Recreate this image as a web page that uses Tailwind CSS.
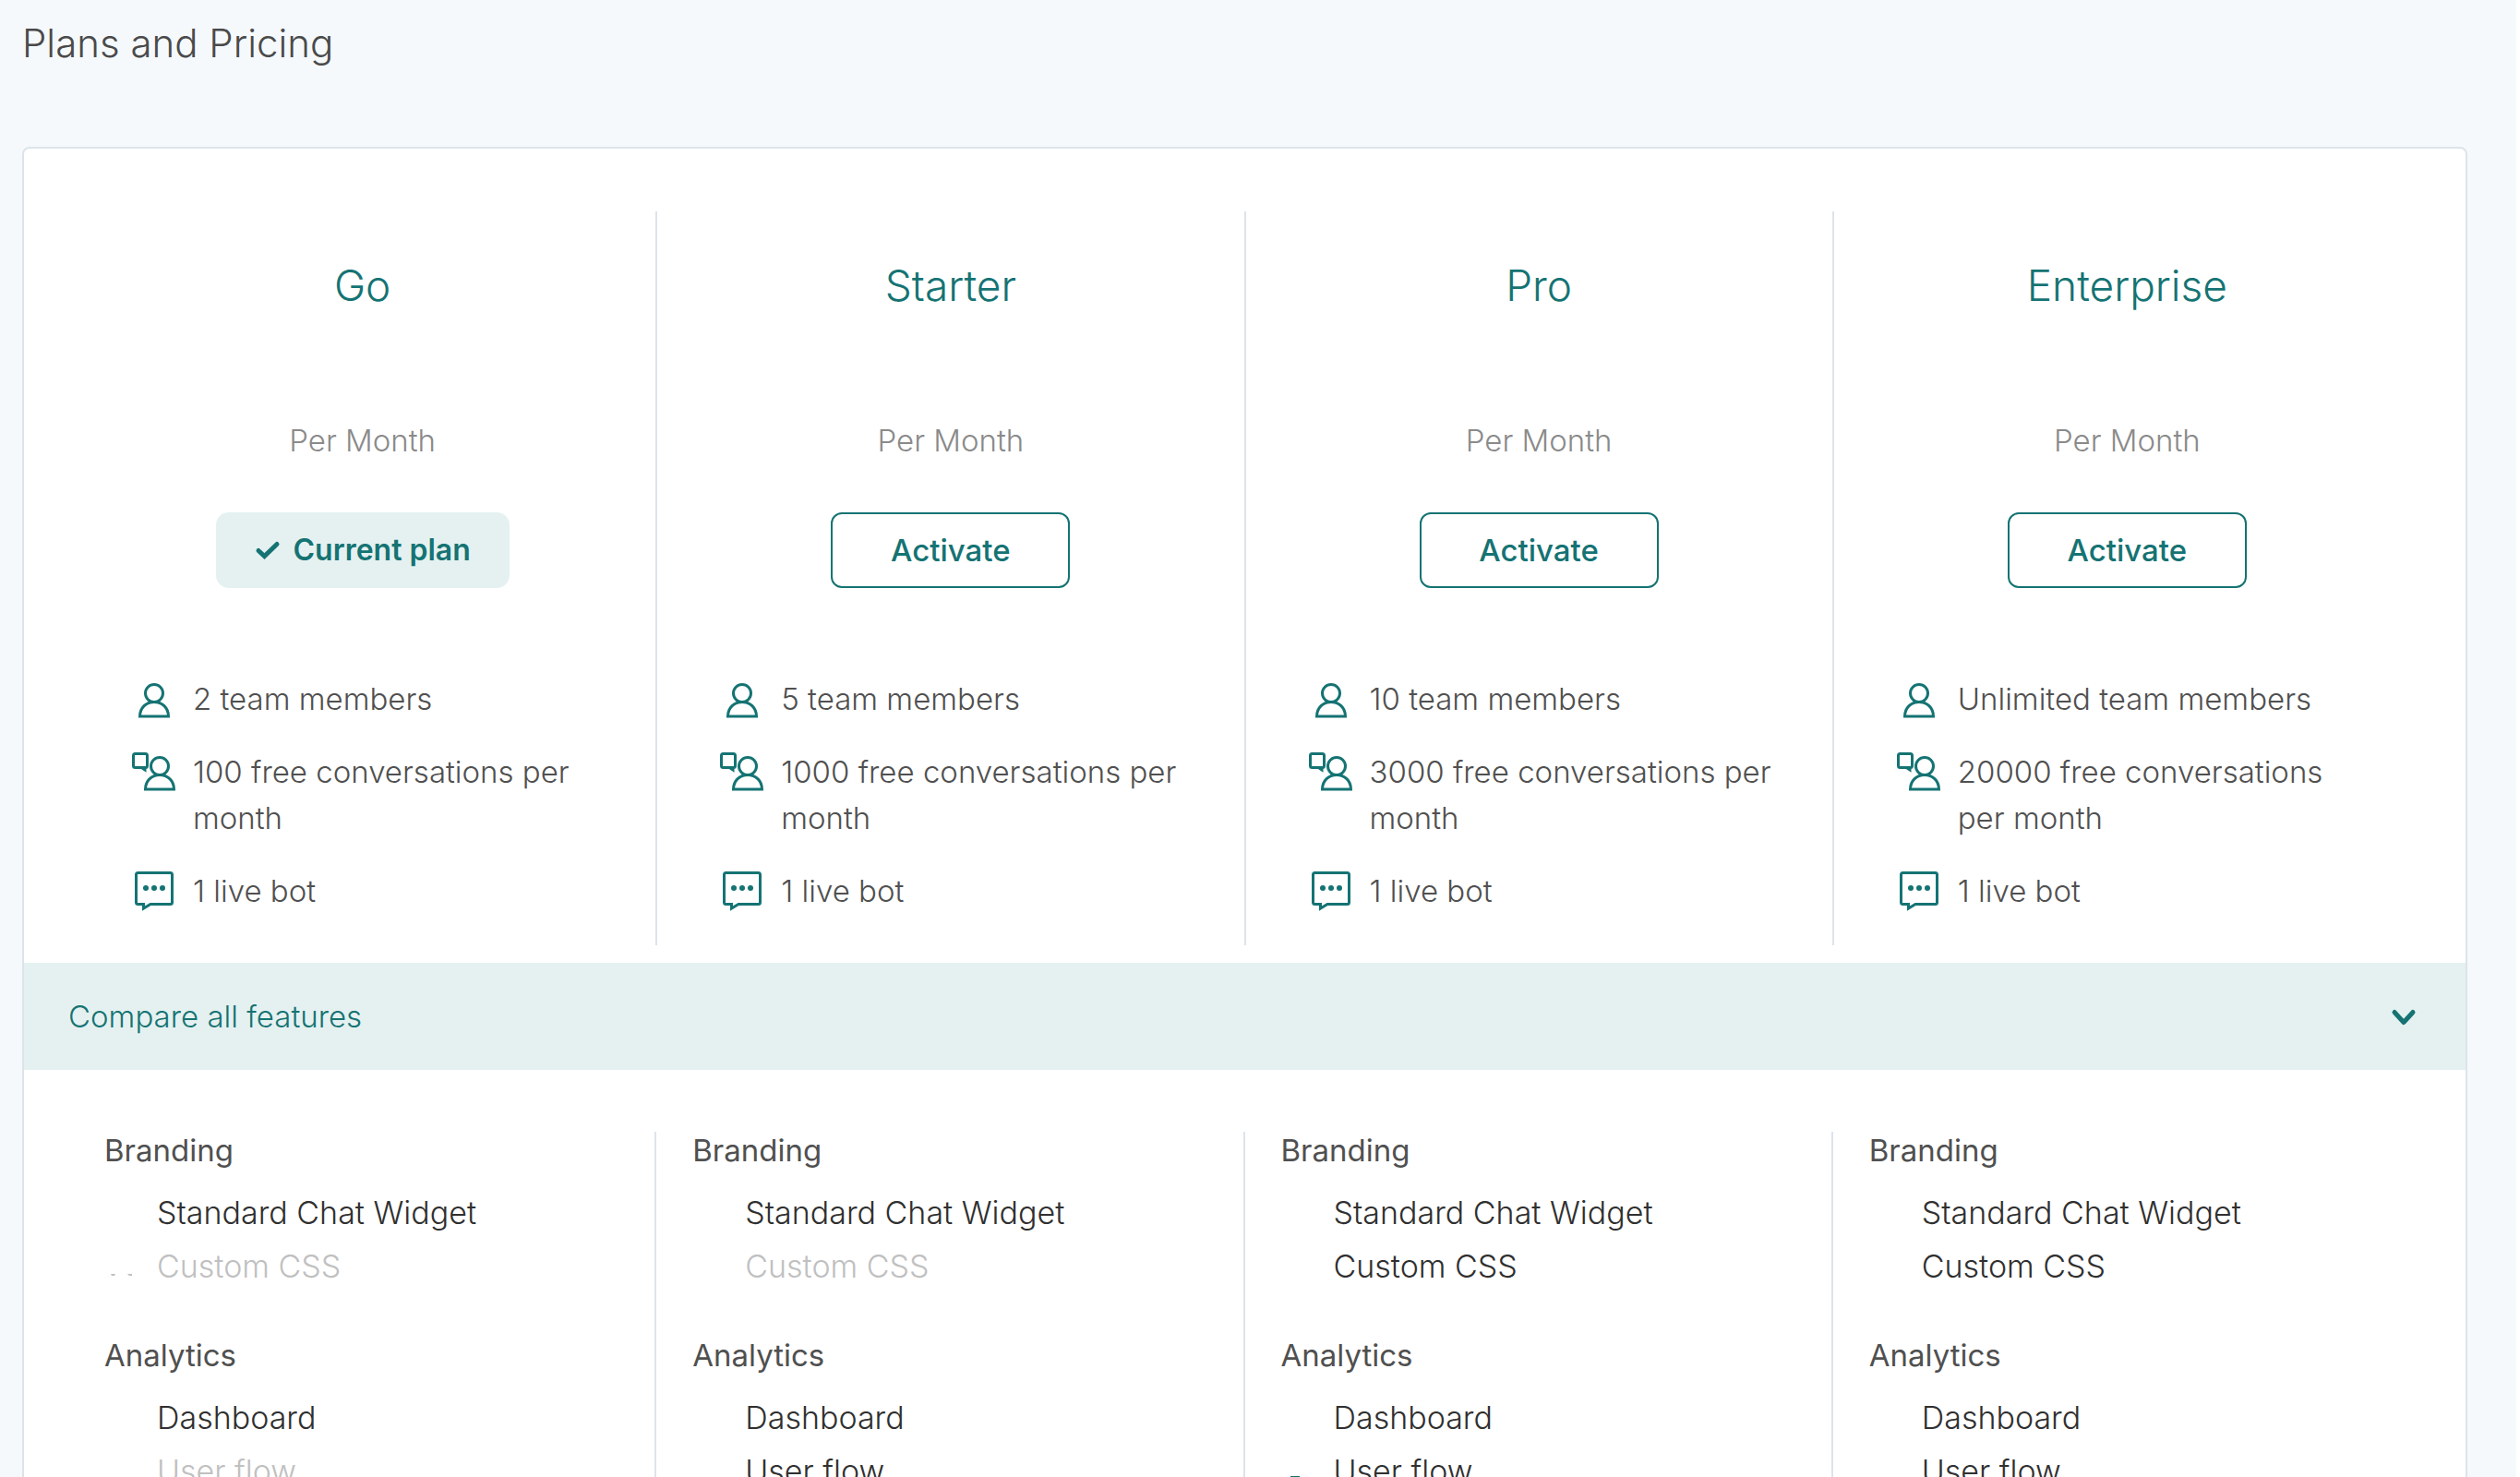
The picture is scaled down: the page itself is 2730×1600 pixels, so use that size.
<!DOCTYPE html>
<html lang="en">
<head>
<meta charset="utf-8">
<title>Plans and Pricing</title>
<script src="https://cdn.jsdelivr.net/npm/@tailwindcss/browser@4"></script>
</head>
<body class="bg-white font-[Inter,'Open_Sans',sans-serif] font-light">
<svg class="hidden" aria-hidden="true">
  <symbol id="person" viewBox="0 0 48 48"><g fill="none" stroke="currentColor" stroke-width="3"><circle cx="24" cy="19" r="9.500"/><path d="M8.500 44C8.500 35 15 28.500 24 28.500S39.500 35 39.500 44Z"/></g></symbol>
  <symbol id="talk" viewBox="0 0 48 48"><g fill="none" stroke="currentColor" stroke-width="3"><rect x="1.500" y="5.500" width="15" height="15" rx="2"/><path d="M11 21l3 2v-2"/><circle cx="30" cy="19" r="9.500"/><path d="M14.500 44C14.500 35 21 28.500 30 28.500S45.500 35 45.500 44Z"/></g></symbol>
  <symbol id="bot" viewBox="0 0 48 48"><path fill="none" stroke="currentColor" stroke-width="3" d="M6.500 5.500H41.500a2 2 0 0 1 2 2V37.500a2 2 0 0 1-2 2H20L12.500 44V39.500H6.500a2 2 0 0 1-2-2V7.500a2 2 0 0 1 2-2Z"/><g fill="currentColor"><circle cx="15" cy="22" r="3"/><circle cx="24" cy="22" r="3"/><circle cx="33" cy="22" r="3"/></g></symbol>
</svg>
<div class="h-screen overflow-hidden bg-[#f5f9fc] border-r-4 border-white pl-6 pr-[53px] text-[33px] leading-[50px]">
  <h1 class="pt-[17px] pb-[82px] text-[42px] leading-[60px] text-[#4a4a4a]">Plans and Pricing</h1>
  <main class="border-2 border-[#dce4ea] rounded-lg bg-white">
    <div id="plans" class="grid grid-cols-4 pl-[49px] pr-[47px] pt-[68px] pb-[19px]"></div>
    <button class="flex w-full items-center justify-between bg-[#e5f1f1] pl-[48px] pr-[53px] h-[116px] text-[#157373]" aria-expanded="true">
      <span>Compare all features</span>
      <svg class="w-[28px] h-[28px]" viewBox="0 0 28 28" fill="none" stroke="currentColor" stroke-width="5" stroke-linecap="round" stroke-linejoin="round"><path d="M4 9.500L14 20.500L24 9.500"/></svg>
    </button>
    <div id="features" class="grid grid-cols-4 px-12 pt-[67px] pb-12"></div>
  </main>
</div>
<script>
const plans = [
  {name:'Go', current:true, facts:['2 team members','100 free conversations per month','1 live bot'], off:['Custom CSS','User flow'],
   marks:{'Custom CSS':'<path fill="#c0c0c0" d="M7 37h5l-1 2h-3zM25 37h5v2h-3z"/>'}},
  {name:'Starter', facts:['5 team members','1000 free conversations per month','1 live bot'], off:['Custom CSS'], marks:{}},
  {name:'Pro', facts:['10 team members','3000 free conversations per month','1 live bot'], off:[],
   marks:{'User flow':'<path fill="#157373" d="M10 34h10v2H10z"/>'}},
  {name:'Enterprise', facts:['Unlimited team members','20000 free conversations per month','1 live bot'], off:[], marks:{}}
];
const groups = [['Branding',['Standard Chat Widget','Custom CSS']],['Analytics',['Dashboard','User flow']]];
const icons = ['person','talk','bot'];
const current = `<button class="flex items-center justify-center gap-3 h-[82px] w-[318px] rounded-[14px] bg-[#e5f1f1] text-[32px] font-semibold text-[#157373]"><svg class="w-[30px] h-[30px]" viewBox="0 0 30 30" fill="none" stroke="currentColor" stroke-width="5" stroke-linecap="round"><path d="M5 15.500L11.500 21.500L25 8.500"/></svg>Current plan</button>`;
const activate = `<button class="h-[82px] w-[259px] rounded-xl border-2 border-[#157373] bg-white font-medium text-[#157373]">Activate</button>`;
document.getElementById('plans').innerHTML = plans.map(p => `
  <section class="flex flex-col items-center border-r-2 border-[#dce4ea] last:border-r-transparent px-16 pt-[50px] pb-[34px]">
    <h2 class="text-[46px] leading-[60px] text-[#157373]">${p.name}</h2>
    <p class="pt-[113px] pb-[53px] text-[#8a8a8a]">Per Month</p>
    ${p.current ? current : activate}
    <ul class="flex w-full flex-col gap-[29px] pt-[95px] pl-1 text-[#505050]">
      ${p.facts.map((f,i) => `<li class="flex items-start gap-[18px]"><svg class="w-12 h-12 shrink-0 text-[#157373]" aria-hidden="true"><use href="#${icons[i]}"/></svg><span>${f}</span></li>`).join('')}
    </ul>
  </section>`).join('');
document.getElementById('features').innerHTML = plans.map(p => `
  <section class="flex flex-col gap-[47px] border-r-2 border-[#dce4ea] last:border-r-transparent pl-[39px] text-[34px]">
    ${groups.map(([title, items]) => `<div>
      <h3 class="pb-[19px] text-[33px] leading-10 font-normal text-[#505050]">${title}</h3>
      <ul class="leading-[58px]">${items.map(x => `<li class="flex ${p.off.includes(x) ? 'text-[#c0c0c0]' : 'text-[#303030]'}"><svg class="w-[57px] h-[58px] shrink-0" aria-hidden="true">${p.marks[x] || ''}</svg>${x}</li>`).join('')}</ul>
    </div>`).join('')}
  </section>`).join('');
</script>
</body>
</html>
